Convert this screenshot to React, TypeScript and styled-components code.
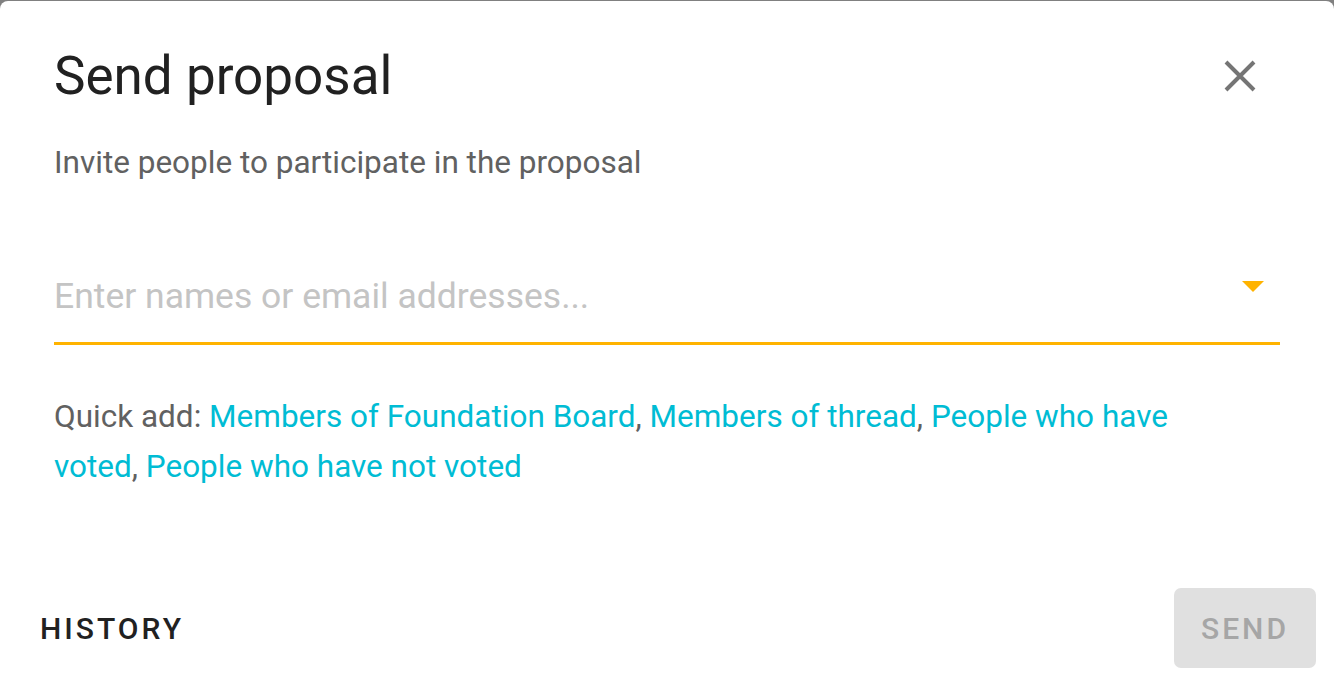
import React from "react";
import styled, { createGlobalStyle } from "styled-components";

const Global = createGlobalStyle`
  html, body { margin: 0; padding: 0; }
  body {
    background: #808080;
    font-family: Roboto, "Noto Sans", sans-serif;
    overflow: hidden;
    height: 682px;
  }
`;

const Dialog = styled.div`
  box-sizing: border-box;
  margin-top: 1px;
  width: 1334px;
  height: 690px;
  background: #fff;
  border-radius: 8px;
  display: flex;
  flex-direction: column;
`;

const Header = styled.div`
  display: flex;
  align-items: center;
  justify-content: space-between;
  padding: 42px 78px 0 54px;
`;

const Title = styled.h1`
  margin: 0;
  font-size: 53px;
  font-weight: 400;
  line-height: 66px;
  color: #212121;
`;

const CloseButton = styled.button`
  border: 0;
  background: none;
  padding: 0;
  width: 32px;
  height: 32px;
  cursor: pointer;
  display: flex;
`;

const Body = styled.div`
  padding: 0 54px;
  display: flex;
  flex-direction: column;
`;

const Subtitle = styled.p`
  margin: 34px 0 0;
  font-size: 31.5px;
  line-height: 40px;
  color: #616161;
`;

const Field = styled.div`
  margin-top: 77px;
  display: flex;
  align-items: flex-start;
  border-bottom: 3px solid #ffb300;
  height: 85px;
  box-sizing: border-box;
`;

const Input = styled.input`
  flex: 1;
  border: 0;
  outline: none;
  padding: 0;
  margin-top: 14px;
  font-family: Roboto, sans-serif;
  font-size: 35.5px;
  line-height: 44px;
  color: #212121;
  background: transparent;
  &::placeholder { color: #c4c4c4; }
`;

const Caret = styled.div`
  margin: 21px 16px 0 0;
  width: 0;
  height: 0;
  border-left: 11px solid transparent;
  border-right: 11px solid transparent;
  border-top: 11px solid #ffb300;
`;

const QuickAdd = styled.p`
  margin: 47px 0 0;
  font-size: 31.5px;
  line-height: 50px;
  color: #616161;
  max-width: 1150px;
`;

const Link = styled.a`
  color: #00bcd4;
  text-decoration: none;
  cursor: pointer;
`;

const Footer = styled.div`
  margin-top: auto;
  display: flex;
  align-items: center;
  justify-content: space-between;
  padding: 0 18px 23px 26px;
`;

const TextButton = styled.button`
  border: 0;
  background: none;
  padding: 0 14px;
  height: 80px;
  font-family: Roboto, sans-serif;
  font-size: 30px;
  font-weight: 500;
  letter-spacing: 3px;
  color: #212121;
`;

const SendButton = styled.button`
  border: 0;
  border-radius: 7px;
  width: 142px;
  height: 80px;
  background: #e0e0e0;
  font-family: Roboto, sans-serif;
  font-size: 30px;
  font-weight: 500;
  letter-spacing: 3px;
  color: #a6a6a6;
`;

export default function App() {
  return (
    <>
      <Global />
      <Dialog>
        <Header>
          <Title>Send proposal</Title>
          <CloseButton aria-label="close">
            <svg width="32" height="32" viewBox="0 0 32 32">
              <path d="M2 2L30 30M30 2L2 30" stroke="#757575" strokeWidth="4" strokeLinecap="butt" />
            </svg>
          </CloseButton>
        </Header>
        <Body>
          <Subtitle>Invite people to participate in the proposal</Subtitle>
          <Field>
            <Input placeholder="Enter names or email addresses..." />
            <Caret />
          </Field>
          <QuickAdd>
            Quick add: <Link>Members of Foundation Board</Link>, <Link>Members of thread</Link>,{" "}
            <Link>People who have voted</Link>, <Link>People who have not voted</Link>
          </QuickAdd>
        </Body>
        <Footer>
          <TextButton>HISTORY</TextButton>
          <SendButton disabled>SEND</SendButton>
        </Footer>
      </Dialog>
    </>
  );
}
